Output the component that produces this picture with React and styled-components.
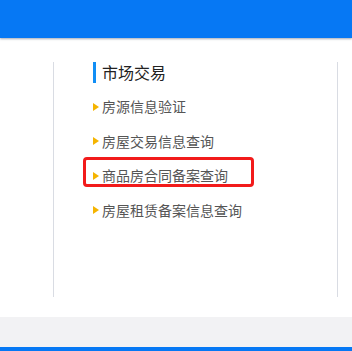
import React from "react";
import styled, { createGlobalStyle } from "styled-components";

const GlobalStyle = createGlobalStyle`
  html, body {
    margin: 0;
    padding: 0;
    background: #fff;
    font-family: "Microsoft YaHei", "Noto Sans CJK SC", "Noto Sans", sans-serif;
  }
`;

const Page = styled.div`
  width: 352px;
  height: 351px;
  overflow: hidden;
  display: flex;
  flex-direction: column;
`;

const Header = styled.div`
  height: 38px;
  flex-shrink: 0;
  background: #0678f4;
  box-shadow: 0 1px 2px rgba(90, 100, 120, 0.55);
  position: relative;
  z-index: 1;
`;

const Main = styled.div`
  display: flex;
  margin-top: 24px;
  height: 235px;
  flex-shrink: 0;
`;

const SideColumn = styled.div`
  width: 53px;
  border-right: 1px solid #d9dce3;
`;

const Column = styled.div`
  width: 284px;
  border-right: 1px solid #d9dce3;
  padding-left: 39px;
  box-sizing: border-box;
`;

const Title = styled.h3`
  margin: 0;
  height: 21px;
  line-height: 21px;
  padding-left: 6px;
  border-left: 3px solid #118ef5;
  font-size: 16px;
  font-weight: normal;
  color: #222;
`;

const List = styled.ul`
  list-style: none;
  margin: 6px 0 0;
  padding: 0;
`;

const Item = styled.li`
  position: relative;
  display: flex;
  align-items: center;
  gap: 3px;
  height: 34.5px;
  font-size: 14px;
  color: #555;

  &::after {
    content: "";
    display: ${(p) => (p.$active ? "block" : "none")};
    position: absolute;
    left: -10px;
    top: 50%;
    margin-top: -18.5px;
    width: 171px;
    height: 30px;
    border: 3px solid #f21b1b;
    border-radius: 4px;
    box-sizing: border-box;
  }
`;

const Arrow = styled.span`
  width: 0;
  height: 0;
  border-top: 4.5px solid transparent;
  border-bottom: 4.5px solid transparent;
  border-left: 6px solid #f5b400;
  margin-top: 1px;
`;

const Band = styled.div`
  margin-top: 20px;
  height: 30px;
  flex-shrink: 0;
  background: #f2f2f4;
`;

const Footer = styled.div`
  flex: 1;
  background: #0678f4;
`;

const items = [
  "房源信息验证",
  "房屋交易信息查询",
  "商品房合同备案查询",
  "房屋租赁备案信息查询",
];

const App = () => {
  return (
    <>
      <GlobalStyle />
      <Page>
        <Header />
        <Main>
          <SideColumn />
          <Column>
            <Title>市场交易</Title>
            <List>
              {items.map((text, i) => (
                <Item key={text} $active={i === 2}>
                  <Arrow />
                  {text}
                </Item>
              ))}
            </List>
          </Column>
        </Main>
        <Band />
        <Footer />
      </Page>
    </>
  );
};

export default App;
